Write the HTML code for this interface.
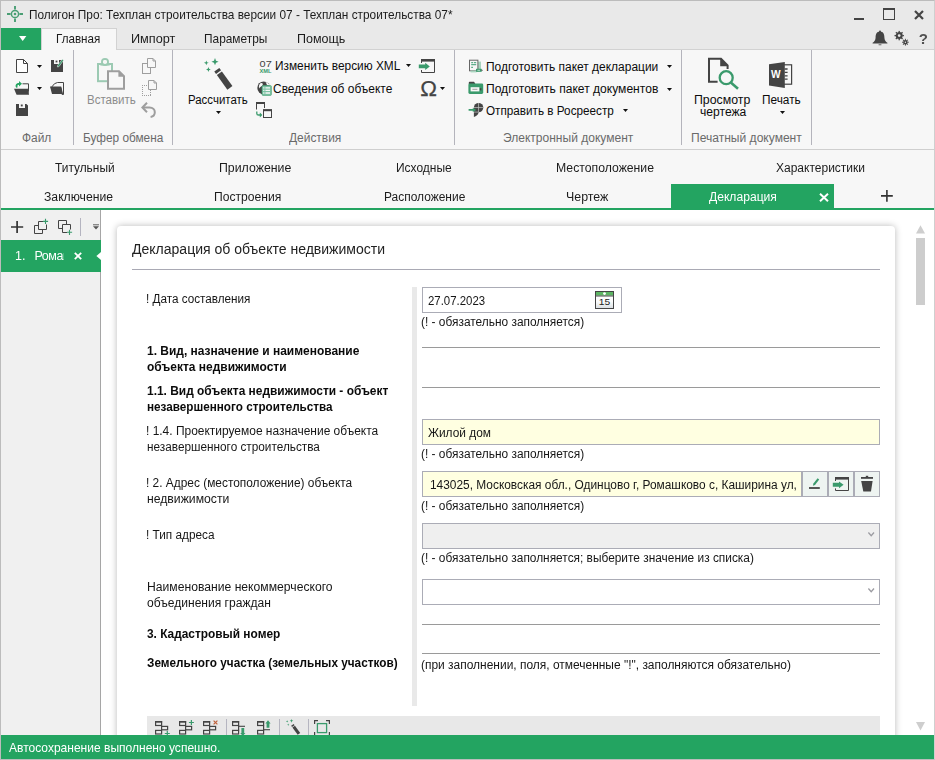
<!DOCTYPE html>
<html lang="ru"><head><meta charset="utf-8"><title>Полигон Про</title><style>
html,body{margin:0;padding:0}
body{width:935px;height:760px;position:relative;overflow:hidden;background:#fff;font-family:"Liberation Sans",sans-serif;}
#app div,#app span,#app svg{position:absolute}
#app span{white-space:pre;line-height:20px;display:block;transform-origin:0 0}
#app svg{overflow:visible}
</style></head><body><div id="app">
<div style="left:0px;top:0px;width:935px;height:50px;background:#e9e9e9"></div>
<div style="left:0px;top:50px;width:935px;height:160px;background:#f7f7f7"></div>
<div style="left:117px;top:49px;width:818px;height:1px;background:#d2d2d2"></div>
<div style="left:1px;top:28px;width:40px;height:22px;background:#23a461"></div>
<div style="left:41px;top:28px;width:76px;height:22px;background:#f7f7f7;border:1px solid #d2d2d2;border-bottom:none;box-sizing:border-box"></div>
<div style="left:0px;top:149px;width:935px;height:1px;background:#cfcfcf"></div>
<div style="left:73px;top:50px;width:1px;height:95px;background:#b4b4bc"></div>
<div style="left:172px;top:50px;width:1px;height:95px;background:#b4b4bc"></div>
<div style="left:454px;top:50px;width:1px;height:95px;background:#b4b4bc"></div>
<div style="left:681px;top:50px;width:1px;height:95px;background:#b4b4bc"></div>
<div style="left:811px;top:50px;width:1px;height:95px;background:#b4b4bc"></div>
<div style="left:671px;top:184px;width:163px;height:26px;background:#23a461"></div>
<div style="left:0px;top:208px;width:935px;height:2px;background:#23a461"></div>
<div style="left:1px;top:210px;width:933px;height:525px;background:#fff"></div>
<div style="left:1px;top:210px;width:99px;height:525px;background:#f0f0f0"></div>
<div style="left:100px;top:210px;width:1px;height:525px;background:#a6a6a6"></div>
<div style="left:1px;top:240px;width:100px;height:32px;background:#23a461"></div>
<div style="left:117px;top:226px;width:778px;height:520px;background:#fff;border-radius:4px;box-shadow:0 0 7px rgba(0,0,0,.28)"></div>
<div style="left:132px;top:269px;width:748px;height:1px;background:#a9a9b4"></div>
<div style="left:412px;top:287px;width:5px;height:419px;background:#e9e9e9"></div>
<div style="left:422px;top:287px;width:200px;height:26px;box-sizing:border-box;border:1px solid #abacb6;background:#fff"></div>
<div style="left:422px;top:419px;width:458px;height:26px;box-sizing:border-box;border:1px solid #abacb6;background:#ffffe1"></div>
<div style="left:422px;top:471px;width:380px;height:26px;box-sizing:border-box;border:1px solid #abacb6;background:#ffffe1"></div>
<div style="left:802px;top:471px;width:26px;height:26px;box-sizing:border-box;border:1px solid #abacb6;background:#eef4f1"></div>
<div style="left:828px;top:471px;width:26px;height:26px;box-sizing:border-box;border:1px solid #abacb6;background:#eef4f1"></div>
<div style="left:854px;top:471px;width:26px;height:26px;box-sizing:border-box;border:1px solid #abacb6;background:#eef4f1"></div>
<div style="left:422px;top:523px;width:458px;height:26px;box-sizing:border-box;border:1px solid #abacb6;background:#efefef"></div>
<div style="left:422px;top:579px;width:458px;height:26px;box-sizing:border-box;border:1px solid #abacb6;background:#fff"></div>
<div style="left:422px;top:347px;width:458px;height:1px;background:#9a9a9a"></div>
<div style="left:422px;top:387px;width:458px;height:1px;background:#9a9a9a"></div>
<div style="left:422px;top:624px;width:458px;height:1px;background:#9a9a9a"></div>
<div style="left:422px;top:653px;width:458px;height:1px;background:#9a9a9a"></div>
<div style="left:147px;top:716px;width:733px;height:19px;background:#e8e8e8"></div>
<div style="left:226px;top:719px;width:1px;height:16px;background:#b5b5c0"></div>
<div style="left:279px;top:719px;width:1px;height:16px;background:#b5b5c0"></div>
<div style="left:308px;top:719px;width:1px;height:16px;background:#b5b5c0"></div>
<div style="left:916px;top:238px;width:9px;height:67px;background:#cdcdcd"></div>
<div style="left:80px;top:218px;width:1px;height:18px;background:#b4b4c0"></div>
<svg style="left:7px;top:6px" width="16" height="16" viewBox="0 0 16 16"><g stroke="#4a9e74" fill="none"><circle cx="8" cy="8" r="3.6" stroke-width="1.5"/><path d="M8 0V3.6M8 12.4V16M0 8H3.6M12.4 8H16" stroke-width="1.9"/></g><circle cx="8" cy="8" r="1.3" fill="#4a9e74"/></svg>
<svg style="left:19px;top:36px" width="7.4" height="5" viewBox="0 0 7.4 5"><path d="M0 0H7.4L3.7 5Z" fill="#fff"/></svg>
<svg style="left:16px;top:59px" width="12" height="14" viewBox="0 0 12 14"><path d="M0.5 0.5H7.5L11.5 4.5V13.5H0.5Z" fill="#fff" stroke="#444444"/><path d="M7.5 0.5V4.5H11.5" fill="none" stroke="#444444"/></svg>
<svg style="left:37px;top:65px" width="5" height="3" viewBox="0 0 5 3"><path d="M0 0H5L2.5 3Z" fill="#111"/></svg>
<svg style="left:51px;top:59px" width="13" height="13" viewBox="0 0 13 13"><path d="M0 1H3V5H8V1H12V13H0Z" fill="#444444"/><rect x="4.6" y="1.6" width="1.8" height="1.8" fill="#444444"/><path d="M11.3 0.2L12.6 1.2L8 7.6L6.4 8L6.6 6.4Z" fill="#3a9a6c" stroke="#f7f7f7" stroke-width="0.5"/></svg>
<svg style="left:14px;top:81px" width="15" height="14" viewBox="0 0 15 14"><path d="M8.5 2.8H14.5V9" fill="none" stroke="#444444"/><path d="M0 7.8H13.8L15 13.8H2.6Z" fill="#444444"/><path d="M15 13.8L13.6 7.8L14.6 7.8L15 9Z" fill="#444444"/><path d="M2.2 6.8C0.6 3.6 2.6 1.9 5 1.9V0L8 2.8L5 5.6V3.8C3.6 3.8 2.8 4.8 3.8 6.3Z" fill="#23a461"/></svg>
<svg style="left:37px;top:87px" width="5" height="3" viewBox="0 0 5 3"><path d="M0 0H5L2.5 3Z" fill="#111"/></svg>
<svg style="left:50px;top:82px" width="14" height="12" viewBox="0 0 14 12"><path d="M5 1.2L8 0H14V12H12.6L11.4 5H1.8Z" fill="none" stroke="#444444" stroke-width="1" transform="translate(-0.5,0.5)"/><path d="M0 4.6H11.2L13 12H2Z" fill="#444444"/></svg>
<svg style="left:16px;top:104px" width="12" height="12" viewBox="0 0 12 12"><path d="M0 0H3V4H9V0H10.4L12 1.6V12H0Z" fill="#444444"/><rect x="4.8" y="0.5" width="1.9" height="1.9" fill="#444444"/></svg>
<svg style="left:96px;top:57px" width="30" height="34" viewBox="0 0 30 34"><rect x="2" y="7" width="14" height="17.2" fill="none" stroke="#9ccab3" stroke-width="2"/><circle cx="9" cy="5" r="3" fill="#f7f7f7" stroke="#9ccab3" stroke-width="2"/><rect x="4.4" y="6" width="9.2" height="2.6" fill="#9ccab3"/><circle cx="9" cy="5" r="2" fill="#f7f7f7"/><path d="M12 14.2H23L28 19.2V31.8H12Z" fill="#f7f7f7" stroke="#9e9e9e" stroke-width="2"/><path d="M22.4 13.6L28.6 19.8H22.4Z" fill="#9e9e9e"/></svg>
<svg style="left:142px;top:58px" width="15" height="17" viewBox="0 0 15 17"><rect x="0.5" y="5.5" width="8" height="10" fill="none" stroke="#9e9e9e"/><path d="M5.5 0.5H11L13.5 3V9.5H5.5Z" fill="#f7f7f7" stroke="#9e9e9e"/><path d="M11 0.5V3H13.5" fill="none" stroke="#9e9e9e"/></svg>
<svg style="left:142px;top:80px" width="16" height="17" viewBox="0 0 16 17"><path d="M0 5.5H9M0 15.5H9" fill="none" stroke="#9e9e9e" stroke-dasharray="1 1" shape-rendering="crispEdges"/><path d="M0.5 5V16M8.5 10V16" fill="none" stroke="#9e9e9e" stroke-dasharray="1 1" shape-rendering="crispEdges"/><path d="M6.5 0.5H12L14.5 3V9.5H6.5Z" fill="#f7f7f7" stroke="#9e9e9e"/><path d="M12 0.5V3H14.5" fill="none" stroke="#9e9e9e"/></svg>
<svg style="left:141px;top:102px" width="16" height="16" viewBox="0 0 16 16"><path d="M2 5.5H8.5C12 5.5 13.8 8 13.8 10.2C13.8 12.8 12 14.6 9.6 15" fill="none" stroke="#9e9e9e" stroke-width="2"/><path d="M6 0.8L1.4 5.5L6 10.2" fill="none" stroke="#9e9e9e" stroke-width="2"/></svg>
<svg style="left:200px;top:58px" width="34" height="34" viewBox="0 0 34 34"><path d="M15.0 0.10000000000000009L16.008 2.692L18.6 3.7L16.008 4.708L15.0 7.300000000000001L13.991999999999999 4.708L11.4 3.7L13.991999999999999 2.692Z" fill="#3a9a6c"/><path d="M6.3 2.4L6.9719999999999995 4.128L8.7 4.8L6.9719999999999995 5.4719999999999995L6.3 7.199999999999999L5.628 5.4719999999999995L3.9 4.8L5.628 4.128Z" fill="#3a9a6c"/><path d="M8.4 9.1L9.072000000000001 10.828L10.8 11.5L9.072000000000001 12.172L8.4 13.9L7.728000000000001 12.172L6.0 11.5L7.728000000000001 10.828Z" fill="#3a9a6c"/><g transform="translate(16.8,11.7) rotate(54.2) scale(1.0)"><rect x="0" y="-3.1" width="3" height="6.2" fill="#444444"/><rect x="4.4" y="-3.1" width="18" height="6.2" fill="#444444"/></g></svg>
<svg style="left:216px;top:111px" width="5" height="3" viewBox="0 0 5 3"><path d="M0 0H5L2.5 3Z" fill="#111"/></svg>
<svg style="left:259px;top:59px" width="14" height="15" viewBox="0 0 14 15"><text x="0.6" y="7.6" font-family="Liberation Sans,sans-serif" font-size="8.8" font-weight="400" fill="#444" textLength="12.2" lengthAdjust="spacingAndGlyphs">07</text><text x="0.5" y="14.2" font-family="Liberation Sans,sans-serif" font-size="5.4" font-weight="700" fill="#3a9a6c" textLength="12" lengthAdjust="spacingAndGlyphs">XML</text></svg>
<svg style="left:257px;top:81px" width="15" height="15" viewBox="0 0 15 15"><circle cx="6.7" cy="6.9" r="6.4" fill="#444444"/><path d="M3.2 2.4C5 1.6 6.4 2.6 5.6 4.2C4.8 5.6 2.6 5.6 2.2 7.4C1.6 6 1.8 3.6 3.2 2.4ZM8.6 1C10.4 1.4 12 2.8 12.6 4.4L10 4Z" fill="#f7f7f7"/><rect x="5" y="4.6" width="9.4" height="9.8" rx="1" fill="#7cc3a4" stroke="#3a9a6c" stroke-width="0.6"/><path d="M8.4 6.8H13M8.4 9.4H13M8.4 12H13" stroke="#f7f7f7" stroke-width="1.3"/><path d="M6.2 6.8H7.4M6.2 9.4H7.4M6.2 12H7.4" stroke="#f7f7f7" stroke-width="1.3"/></svg>
<svg style="left:256px;top:102px" width="17" height="16" viewBox="0 0 17 16"><path d="M0.5 7.5V1H8.5V6" fill="none" stroke="#444444"/><rect x="0" y="0" width="9" height="2" fill="#444444"/><rect x="7.5" y="8" width="8" height="7.5" fill="#f7f7f7" stroke="#444444"/><rect x="7" y="7.2" width="9" height="2" fill="#444444"/><path d="M0.8 9.4V11.4C0.8 12.6 1.4 13 2.6 13H5" fill="none" stroke="#3a9a6c" stroke-width="1.3"/><path d="M3.8 10.6L6.4 13L3.8 15.4Z" fill="#3a9a6c"/></svg>
<svg style="left:406px;top:64px" width="5" height="3" viewBox="0 0 5 3"><path d="M0 0H5L2.5 3Z" fill="#111"/></svg>
<svg style="left:418px;top:59px" width="17" height="14" viewBox="0 0 17 14"><path d="M3.5 4V0.5H16.5V13.5H3.5V11" fill="none" stroke="#444444"/><rect x="3" y="0" width="14" height="2.6" fill="#444444"/><path d="M0.8 5.6H7.2V3.8L11.8 7.4L7.2 11V9.2H0.8Z" fill="#3a9a6c"/></svg>
<svg style="left:419px;top:78px" width="20" height="20" viewBox="0 0 20 20"><text x="1.2" y="17.6" font-family="Liberation Sans,sans-serif" font-size="22.4" fill="#444444" stroke="#444444" stroke-width="0.25">Ω</text></svg>
<svg style="left:440px;top:87px" width="5" height="3" viewBox="0 0 5 3"><path d="M0 0H5L2.5 3Z" fill="#111"/></svg>
<svg style="left:468px;top:59px" width="15" height="14" viewBox="0 0 15 14"><rect x="8" y="2.6" width="5" height="10" fill="#a9d4bf"/><rect x="1.5" y="1.2" width="8.4" height="10.6" fill="#f7f7f7" stroke="#666" stroke-width="1"/><path d="M3.2 3.6H5.2M6 3.6H8.2M3.2 5.6H8.2M3.2 8.4H5" stroke="#5fae8b" stroke-width="1.2"/><rect x="2.6" y="11.6" width="6" height="1.8" fill="#a9d4bf"/><rect x="8" y="9.8" width="5.8" height="3" rx="0.6" fill="#3a9a6c"/><rect x="13.4" y="10.8" width="1.2" height="1.2" fill="#666"/><path d="M9.4 11.3H12" stroke="#d8efe4" stroke-width="0.8"/></svg>
<svg style="left:468px;top:81px" width="16" height="14" viewBox="0 0 16 14"><path d="M0.8 3V1.6Q0.8 0.8 1.6 0.8H6L7.2 2.4V3Z" fill="#444444"/><rect x="0.4" y="2.4" width="14.8" height="10.6" rx="1.4" fill="#3a9a6c"/><rect x="2.6" y="6.2" width="8.8" height="4.2" fill="#f7f7f7"/><rect x="11.8" y="7.2" width="1.6" height="2.2" fill="#444"/><path d="M4.4 8.3H9.4" stroke="#8a8a8a" stroke-width="0.8"/></svg>
<svg style="left:468px;top:102px" width="17" height="16" viewBox="0 0 17 16"><circle cx="10.6" cy="5.6" r="4.7" fill="#444444"/><path d="M5.9 5.6V14.9C8.2 14.4 10.4 12.6 10.6 10.2V5.6Z" fill="#444444"/><path d="M10.55 0.8V10.3M5.9 5.55H15.4M5.9 10.1H10.5" stroke="#c8c8c8" stroke-width="0.7" fill="none"/><path d="M0.6 7.1H4.8V5.7L8.3 7.9L4.8 10.1V8.7H0.6Z" fill="#3a9a6c"/></svg>
<svg style="left:667px;top:65px" width="5" height="3" viewBox="0 0 5 3"><path d="M0 0H5L2.5 3Z" fill="#111"/></svg>
<svg style="left:667px;top:88px" width="5" height="3" viewBox="0 0 5 3"><path d="M0 0H5L2.5 3Z" fill="#111"/></svg>
<svg style="left:623px;top:109px" width="5" height="3" viewBox="0 0 5 3"><path d="M0 0H5L2.5 3Z" fill="#111"/></svg>
<svg style="left:706px;top:56px" width="34" height="35" viewBox="0 0 34 35"><path d="M11.6 25.8H3V2.8H15L21.6 9.4V13" fill="none" stroke="#444444" stroke-width="2"/><path d="M14.2 2V10.2H22.4Z" fill="#444444"/><circle cx="20.2" cy="21.7" r="6.5" fill="none" stroke="#3a9a6c" stroke-width="2.3"/><path d="M24.8 26.6L32 32.8" stroke="#3a9a6c" stroke-width="2.6"/></svg>
<svg style="left:768px;top:61px" width="25" height="28" viewBox="0 0 25 28"><rect x="15" y="3.8" width="8.6" height="19.4" fill="#f7f7f7" stroke="#444444" stroke-width="1.2"/><path d="M16.6 8H19.6M16.6 11.4H19.6M16.6 14.8H19.6M16.6 18.2H19.6" stroke="#444444" stroke-width="1.3"/><path d="M1 3.2L16.8 1V27L1 24.6Z" fill="#444444"/><text x="3" y="16.6" font-family="Liberation Sans,sans-serif" font-size="10.5" font-weight="700" fill="#fff" textLength="9.6" lengthAdjust="spacingAndGlyphs">W</text></svg>
<svg style="left:780px;top:111px" width="5" height="3" viewBox="0 0 5 3"><path d="M0 0H5L2.5 3Z" fill="#111"/></svg>
<svg style="left:854px;top:18px" width="10" height="2" viewBox="0 0 10 2"><rect width="10" height="2" fill="#444444"/></svg>
<svg style="left:883px;top:8px" width="12" height="12" viewBox="0 0 12 12"><rect x="0.5" y="0.5" width="11" height="11" fill="none" stroke="#444444"/><rect x="0" y="0" width="12" height="2" fill="#444444"/></svg>
<svg style="left:914px;top:10px" width="10" height="10" viewBox="0 0 10 10"><path d="M1 1L9 9M9 1L1 9" stroke="#444444" stroke-width="2.2"/></svg>
<svg style="left:872px;top:30px" width="16" height="16" viewBox="0 0 16 16"><path d="M8 1.6C4.6 1.6 3.6 4.6 3.6 7.4C3.6 10 2.2 11.6 0.6 12.8V13.6H15.4V12.8C13.8 11.6 12.4 10 12.4 7.4C12.4 4.6 11.4 1.6 8 1.6Z" fill="#444444"/><circle cx="8" cy="1.4" r="1" fill="#444444"/><path d="M6.6 14.4H9.4V15.2H6.6Z" fill="#444444"/></svg>
<svg style="left:894px;top:30px" width="15" height="16" viewBox="0 0 15 16"><circle cx="5.2" cy="5.6" r="2.4499999999999997" fill="none" stroke="#444444" stroke-width="2.10"/><rect x="4.55" y="0.8999999999999995" width="1.3" height="1.6" fill="#444444" transform="rotate(0.0 5.2 5.6)"/><rect x="4.55" y="0.8999999999999995" width="1.3" height="1.6" fill="#444444" transform="rotate(45.0 5.2 5.6)"/><rect x="4.55" y="0.8999999999999995" width="1.3" height="1.6" fill="#444444" transform="rotate(90.0 5.2 5.6)"/><rect x="4.55" y="0.8999999999999995" width="1.3" height="1.6" fill="#444444" transform="rotate(135.0 5.2 5.6)"/><rect x="4.55" y="0.8999999999999995" width="1.3" height="1.6" fill="#444444" transform="rotate(180.0 5.2 5.6)"/><rect x="4.55" y="0.8999999999999995" width="1.3" height="1.6" fill="#444444" transform="rotate(225.0 5.2 5.6)"/><rect x="4.55" y="0.8999999999999995" width="1.3" height="1.6" fill="#444444" transform="rotate(270.0 5.2 5.6)"/><rect x="4.55" y="0.8999999999999995" width="1.3" height="1.6" fill="#444444" transform="rotate(315.0 5.2 5.6)"/><circle cx="11.4" cy="12.2" r="1.45" fill="none" stroke="#444444" stroke-width="1.50"/><rect x="10.950000000000001" y="8.799999999999999" width="0.9" height="1.6" fill="#444444" transform="rotate(0.0 11.4 12.2)"/><rect x="10.950000000000001" y="8.799999999999999" width="0.9" height="1.6" fill="#444444" transform="rotate(45.0 11.4 12.2)"/><rect x="10.950000000000001" y="8.799999999999999" width="0.9" height="1.6" fill="#444444" transform="rotate(90.0 11.4 12.2)"/><rect x="10.950000000000001" y="8.799999999999999" width="0.9" height="1.6" fill="#444444" transform="rotate(135.0 11.4 12.2)"/><rect x="10.950000000000001" y="8.799999999999999" width="0.9" height="1.6" fill="#444444" transform="rotate(180.0 11.4 12.2)"/><rect x="10.950000000000001" y="8.799999999999999" width="0.9" height="1.6" fill="#444444" transform="rotate(225.0 11.4 12.2)"/><rect x="10.950000000000001" y="8.799999999999999" width="0.9" height="1.6" fill="#444444" transform="rotate(270.0 11.4 12.2)"/><rect x="10.950000000000001" y="8.799999999999999" width="0.9" height="1.6" fill="#444444" transform="rotate(315.0 11.4 12.2)"/></svg>
<svg style="left:11px;top:221px" width="12" height="12" viewBox="0 0 12 12"><path d="M6.1 0V12M0 6H12.2" stroke="#333" stroke-width="1.7"/></svg>
<svg style="left:34px;top:218px" width="14" height="16" viewBox="0 0 14 16"><path d="M4.5 7.5H0.5V15.5H8.5V11.5" fill="none" stroke="#444444"/><path d="M9 3.5H4.5V11.5H12.5V6.5" fill="none" stroke="#444444"/><path d="M11.5 0.8V6M8.9 3.4H14.1" stroke="#3a9a6c" stroke-width="1.1"/></svg>
<svg style="left:58px;top:220px" width="14" height="16" viewBox="0 0 14 16"><path d="M4.5 8.5H0.5V0.5H8.5V4.5" fill="none" stroke="#444444"/><path d="M9 12.5H4.5V4.5H12.5V9.5" fill="none" stroke="#444444"/><path d="M11.5 9.7V14.9M8.9 12.3H14.1" stroke="#3a9a6c" stroke-width="1.1"/></svg>
<svg style="left:93px;top:224px" width="6" height="6" viewBox="0 0 6 6"><rect x="0" y="0" width="6" height="1.4" fill="#8a8a8a"/><path d="M0 2.2H6L3 5.6Z" fill="#555"/></svg>
<svg style="left:74px;top:252px" width="8" height="8" viewBox="0 0 8 8"><path d="M0.8 0.8L7.2 7.2M7.2 0.8L0.8 7.2" stroke="#fff" stroke-width="1.8"/></svg>
<svg style="left:96px;top:252px" width="5" height="8" viewBox="0 0 5 8"><path d="M5 0V8L0.4 4Z" fill="#fff"/></svg>
<svg style="left:819px;top:193px" width="10" height="9" viewBox="0 0 10 9"><path d="M1 0.8L9 8.2M9 0.8L1 8.2" stroke="#fff" stroke-width="2"/></svg>
<svg style="left:881px;top:190px" width="12" height="12" viewBox="0 0 12 12"><path d="M5.9 0V11.8M0 5.9H11.8" stroke="#333" stroke-width="1.6"/></svg>
<svg style="left:916px;top:225px" width="9" height="9" viewBox="0 0 9 9"><path d="M4.5 0.2L9 8.4H0Z" fill="#cecece"/></svg>
<svg style="left:916px;top:722px" width="9" height="9" viewBox="0 0 9 9"><path d="M0 0H9L4.5 8.6Z" fill="#cecece"/></svg>
<svg style="left:595px;top:291px" width="19" height="18" viewBox="0 0 19 18"><defs><linearGradient id="cg" x1="0" y1="0" x2="0" y2="1"><stop offset="0" stop-color="#fff"/><stop offset="0.6" stop-color="#fafbfb"/><stop offset="1" stop-color="#d9dee2"/></linearGradient></defs><rect x="0.5" y="0.5" width="18" height="17" fill="url(#cg)" stroke="#444"/><rect x="1" y="1" width="17" height="3.6" fill="#5cb563"/><rect x="0.5" y="4.5" width="18" height="1" fill="#4a4a4a"/><circle cx="9.5" cy="2.6" r="1.4" fill="#fff"/><text x="3.7" y="14.4" font-family="Liberation Sans,sans-serif" font-size="9.4" fill="#222" textLength="11.4" lengthAdjust="spacingAndGlyphs">15</text></svg>
<svg style="left:808px;top:477px" width="13" height="13" viewBox="0 0 13 13"><rect x="1" y="10.1" width="10.8" height="1.8" fill="#444444"/><path d="M9.6 1.2L11.2 2.4L7 8L4.9 8.8L5.4 6.6Z" fill="#3a9a6c"/></svg>
<svg style="left:832px;top:477px" width="17" height="14" viewBox="0 0 17 14"><path d="M3.5 4V0.5H16.5V13.5H3.5V11.4" fill="none" stroke="#444444"/><rect x="3" y="0" width="14" height="2.6" fill="#444444"/><path d="M0.8 5.8H7V4.4L11.6 7.8L7 11.2V9.8H0.8Z" fill="#3a9a6c"/></svg>
<svg style="left:861px;top:475px" width="12" height="17" viewBox="0 0 12 17"><rect x="0" y="2" width="12" height="1.8" fill="#444444"/><rect x="4.8" y="0.8" width="2.4" height="1.6" fill="#444444"/><path d="M0.2 5.9H11.6L10 16.5H2.3Z" fill="#444444"/></svg>
<svg style="left:867.6px;top:532.3px" width="7" height="5" viewBox="0 0 7 5"><path d="M0.4 0.5L3.2 3.7L6 0.5" fill="none" stroke="#9c9ca2" stroke-width="1.3"/></svg>
<svg style="left:867.6px;top:588.3px" width="7" height="5" viewBox="0 0 7 5"><path d="M0.4 0.5L3.2 3.7L6 0.5" fill="none" stroke="#9c9ca2" stroke-width="1.3"/></svg>
<svg style="left:155px;top:721px" width="16" height="14" viewBox="0 0 16 14"><rect x="0.6" y="0.9" width="6" height="3.6" fill="none" stroke="#444444" stroke-width="1.2"/><rect x="0" y="0" width="7.2" height="1.4" fill="#444444"/><rect x="6.6" y="5.4" width="6" height="3.4" fill="none" stroke="#444444" stroke-width="1.2"/><rect x="0.6" y="9.4" width="6" height="3.6" fill="none" stroke="#444444" stroke-width="1.2"/><path d="M12.3 10V15M9.8 12.5H14.8" stroke="#3a9a6c" stroke-width="1.2"/></svg>
<svg style="left:179px;top:721px" width="16" height="14" viewBox="0 0 16 14"><rect x="0.6" y="0.9" width="6" height="3.6" fill="none" stroke="#444444" stroke-width="1.2"/><rect x="0" y="0" width="7.2" height="1.4" fill="#444444"/><rect x="6.6" y="5.4" width="6" height="3.4" fill="none" stroke="#444444" stroke-width="1.2"/><rect x="0.6" y="9.4" width="6" height="3.6" fill="none" stroke="#444444" stroke-width="1.2"/><path d="M12.4 -1V4M9.9 1.5H14.9" stroke="#3a9a6c" stroke-width="1.2"/></svg>
<svg style="left:203px;top:721px" width="16" height="14" viewBox="0 0 16 14"><rect x="0.6" y="0.9" width="6" height="3.6" fill="none" stroke="#444444" stroke-width="1.2"/><rect x="0" y="0" width="7.2" height="1.4" fill="#444444"/><rect x="6.6" y="5.4" width="6" height="3.4" fill="none" stroke="#444444" stroke-width="1.2"/><rect x="0.6" y="9.4" width="6" height="3.6" fill="none" stroke="#444444" stroke-width="1.2"/><path d="M10.6 -0.4L14.4 3.4M14.4 -0.4L10.6 3.4" stroke="#c0623c" stroke-width="1.2"/></svg>
<svg style="left:232px;top:721px" width="14" height="14" viewBox="0 0 14 14"><rect x="0.6" y="0.9" width="6" height="3.6" fill="none" stroke="#444444" stroke-width="1.2"/><rect x="0" y="0" width="7.2" height="1.4" fill="#444444"/><rect x="0.6" y="9.4" width="6" height="3.6" fill="none" stroke="#444444" stroke-width="1.2"/><path d="M6.6 4.5V9.4" stroke="#444444" stroke-width="1.2"/><path d="M6.6 5.3H13" stroke="#444444" stroke-width="1.1"/><path d="M9.4 6.9H12.2V12H13.4L10.8 15L8.2 12H9.4Z" fill="#3a9a6c"/></svg>
<svg style="left:257px;top:721px" width="14" height="14" viewBox="0 0 14 14"><rect x="0.6" y="0.9" width="6" height="3.6" fill="none" stroke="#444444" stroke-width="1.2"/><rect x="0" y="0" width="7.2" height="1.4" fill="#444444"/><rect x="0.6" y="9.4" width="6" height="3.6" fill="none" stroke="#444444" stroke-width="1.2"/><path d="M6.6 4.5V9.4" stroke="#444444" stroke-width="1.2"/><path d="M6.6 8.7H13" stroke="#444444" stroke-width="1.1"/><path d="M9.6 6.8H12.4V2.4H13.6L11 -0.8L8.4 2.4H9.6Z" fill="#3a9a6c"/></svg>
<svg style="left:284px;top:719px" width="17" height="17" viewBox="0 0 17 17"><path d="M7.5 0.050000000000000044L8.004 1.346L9.3 1.85L8.004 2.354L7.5 3.6500000000000004L6.9959999999999996 2.354L5.7 1.85L6.9959999999999996 1.346Z" fill="#3a9a6c"/><path d="M3.15 1.2L3.4859999999999998 2.064L4.35 2.4L3.4859999999999998 2.7359999999999998L3.15 3.5999999999999996L2.814 2.7359999999999998L1.95 2.4L2.814 2.064Z" fill="#3a9a6c"/><path d="M4.2 4.55L4.5360000000000005 5.414L5.4 5.75L4.5360000000000005 6.086L4.2 6.95L3.8640000000000003 6.086L3.0 5.75L3.8640000000000003 5.414Z" fill="#3a9a6c"/><g transform="translate(8.4,5.85) rotate(54.2) scale(0.5)"><rect x="0" y="-3.1" width="3" height="6.2" fill="#444444"/><rect x="4.4" y="-3.1" width="18" height="6.2" fill="#444444"/></g></svg>
<svg style="left:314px;top:720px" width="16" height="16" viewBox="0 0 16 16"><path d="M0.6 4V0.6H4M12 0.6H15.4V4M0.6 12V15.4M15.4 12V15.4" fill="none" stroke="#444444" stroke-width="1.2"/><rect x="3.4" y="3.6" width="9.2" height="9" fill="none" stroke="#3a9a6c" stroke-width="1.3"/></svg>
<div style="left:0;top:735px;width:935px;height:25px;background:#23a461"></div>
<div style="left:0;top:0;width:935px;height:760px;box-sizing:border-box;border:1px solid #bcbcbc;border-right-color:#cfcfcf"></div>
<span style="left:22.30px;top:128px;font-size:12.3px;color:#6a6a6a;transform:scaleX(0.9688);">Файл</span>
<span style="left:83.31px;top:128px;font-size:12.3px;color:#6a6a6a;transform:scaleX(0.9607);">Буфер обмена</span>
<span style="left:288.80px;top:128px;font-size:12.3px;color:#6a6a6a;transform:scaleX(0.9704);">Действия</span>
<span style="left:502.80px;top:128px;font-size:12.3px;color:#6a6a6a;transform:scaleX(0.9779);">Электронный документ</span>
<span style="left:691.30px;top:128px;font-size:12.3px;color:#6a6a6a;transform:scaleX(0.9800);">Печатный документ</span>
<span style="left:86.83px;top:90px;font-size:12.3px;color:#8c8c8c;transform:scaleX(0.9352);">Вставить</span>
<span style="left:188.33px;top:90px;font-size:12.3px;color:#0c0c0c;transform:scaleX(0.9309);">Рассчитать</span>
<span style="left:275.31px;top:56px;font-size:12.3px;color:#0c0c0c;transform:scaleX(0.9644);">Изменить версию XML</span>
<span style="left:273.30px;top:79px;font-size:12.3px;color:#0c0c0c;transform:scaleX(0.9719);">Сведения об объекте</span>
<span style="left:485.80px;top:57px;font-size:12.3px;color:#0c0c0c;transform:scaleX(0.9731);">Подготовить пакет декларации</span>
<span style="left:485.80px;top:79px;font-size:12.3px;color:#0c0c0c;transform:scaleX(0.9815);">Подготовить пакет документов</span>
<span style="left:485.82px;top:101px;font-size:12.3px;color:#0c0c0c;transform:scaleX(0.9526);">Отправить в Росреестр</span>
<span style="left:694.28px;top:90px;font-size:12.3px;color:#0c0c0c;transform:scaleX(1.0029);">Просмотр</span>
<span style="left:700.29px;top:102px;font-size:12.3px;color:#0c0c0c;transform:scaleX(0.9837);">чертежа</span>
<span style="left:761.81px;top:90px;font-size:12.3px;color:#0c0c0c;transform:scaleX(0.9624);">Печать</span>
<div id="g" style="left:0;top:0;width:935px;height:760px;will-change:transform">
<span style="left:28.61px;top:5px;font-size:13px;color:#1c1c1c;transform:scaleX(0.9107);">Полигон Про: Техплан строительства версии 07 - Техплан строительства 07*</span>
<span style="left:56.32px;top:29px;font-size:13px;color:#1c1c1c;transform:scaleX(0.8944);">Главная</span>
<span style="left:131.26px;top:29px;font-size:13px;color:#1c1c1c;transform:scaleX(0.9763);">Импорт</span>
<span style="left:204.31px;top:29px;font-size:13px;color:#1c1c1c;transform:scaleX(0.9131);">Параметры</span>
<span style="left:297.27px;top:29px;font-size:13px;color:#1c1c1c;transform:scaleX(0.9629);">Помощь</span>
<span style="left:55.31px;top:158px;font-size:12px;color:#1c1c1c;transform:scaleX(0.9916);">Титульный</span>
<span style="left:219.28px;top:158px;font-size:12px;color:#1c1c1c;transform:scaleX(1.0276);">Приложение</span>
<span style="left:395.60px;top:158px;font-size:12px;color:#1c1c1c;transform:scaleX(0.9977);">Исходные</span>
<span style="left:555.59px;top:158px;font-size:12px;color:#1c1c1c;transform:scaleX(1.0196);">Местоположение</span>
<span style="left:776.30px;top:158px;font-size:12px;color:#1c1c1c;transform:scaleX(1.0002);">Характеристики</span>
<span style="left:44.29px;top:187px;font-size:12px;color:#1c1c1c;transform:scaleX(1.0152);">Заключение</span>
<span style="left:214.29px;top:187px;font-size:12px;color:#1c1c1c;transform:scaleX(1.0098);">Построения</span>
<span style="left:384.00px;top:187px;font-size:12px;color:#1c1c1c;transform:scaleX(0.9965);">Расположение</span>
<span style="left:566.28px;top:187px;font-size:12px;color:#1c1c1c;transform:scaleX(1.0323);">Чертеж</span>
<span style="left:708.99px;top:187px;font-size:12px;color:#fff;transform:scaleX(1.0091);">Декларация</span>
<span style="left:15.00px;top:246px;font-size:12.5px;letter-spacing:0px;color:#fff;">1.</span>
<span style="left:34.50px;top:246px;font-size:12.5px;letter-spacing:-0.45px;color:#fff;width:29.8px;overflow:hidden;">Роман</span>
<span style="left:132.18px;top:239px;font-size:14px;color:#222;transform:scaleX(1.0015);">Декларация об объекте недвижимости</span>
<span style="left:146.43px;top:289px;font-size:12px;color:#161616;transform:scaleX(0.9759);">! Дата составления</span>
<span style="left:147.00px;top:341px;font-size:12px;color:#0a0a0a;transform:scaleX(0.9970);font-weight:700;">1. Вид, назначение и наименование</span>
<span style="left:147.00px;top:357px;font-size:12px;color:#0a0a0a;transform:scaleX(0.9978);font-weight:700;">объекта недвижимости</span>
<span style="left:147.00px;top:381px;font-size:12px;color:#0a0a0a;transform:scaleX(0.9938);font-weight:700;">1.1. Вид объекта недвижимости - объект</span>
<span style="left:147.02px;top:397px;font-size:12px;color:#0a0a0a;transform:scaleX(0.9756);font-weight:700;">незавершенного строительства</span>
<span style="left:146.40px;top:421px;font-size:12px;color:#161616;transform:scaleX(0.9967);">! 1.4. Проектируемое назначение объекта</span>
<span style="left:147.01px;top:437px;font-size:12px;color:#161616;transform:scaleX(0.9823);">незавершенного строительства</span>
<span style="left:146.41px;top:473px;font-size:12px;color:#161616;transform:scaleX(0.9912);">! 2. Адрес (местоположение) объекта</span>
<span style="left:146.99px;top:489px;font-size:12px;color:#161616;transform:scaleX(1.0165);">недвижимости</span>
<span style="left:146.42px;top:525px;font-size:12px;color:#161616;transform:scaleX(0.9823);">! Тип адреса</span>
<span style="left:146.99px;top:577px;font-size:12px;color:#161616;transform:scaleX(1.0130);">Наименование некоммерческого</span>
<span style="left:147.00px;top:593px;font-size:12px;color:#161616;transform:scaleX(1.0051);">объединения граждан</span>
<span style="left:147.01px;top:624px;font-size:12px;color:#0a0a0a;transform:scaleX(0.9901);font-weight:700;">3. Кадастровый номер</span>
<span style="left:147.01px;top:653px;font-size:12px;color:#0a0a0a;transform:scaleX(0.9813);font-weight:700;">Земельного участка (земельных участков)</span>
<span style="left:427.73px;top:291px;font-size:12px;color:#161616;transform:scaleX(0.9513);">27.07.2023</span>
<span style="left:420.71px;top:312px;font-size:12px;color:#161616;transform:scaleX(0.9916);">(! - обязательно заполняется)</span>
<span style="left:420.71px;top:444px;font-size:12px;color:#161616;transform:scaleX(0.9916);">(! - обязательно заполняется)</span>
<span style="left:420.71px;top:496px;font-size:12px;color:#161616;transform:scaleX(0.9916);">(! - обязательно заполняется)</span>
<span style="left:420.71px;top:548px;font-size:12px;color:#161616;transform:scaleX(0.9904);">(! - обязательно заполняется; выберите значение из списка)</span>
<span style="left:420.70px;top:655px;font-size:12px;color:#161616;transform:scaleX(0.9966);">(при заполнении, поля, отмеченные &quot;!&quot;, заполняются обязательно)</span>
<span style="left:428.31px;top:423px;font-size:12px;color:#161616;transform:scaleX(0.9910);">Жилой дом</span>
<span style="left:429.71px;top:475px;font-size:12px;color:#161616;transform:scaleX(0.9909);">143025, Московская обл., Одинцово г, Ромашково с, Каширина ул,</span>
<span style="left:8.50px;top:738px;font-size:13px;color:#fff;transform:scaleX(0.9250);">Автосохранение выполнено успешно.</span>
<span style="left:918.70px;top:29px;font-size:15px;letter-spacing:0px;color:#505050;font-weight:700;">?</span>
</div>
</div></body></html>
